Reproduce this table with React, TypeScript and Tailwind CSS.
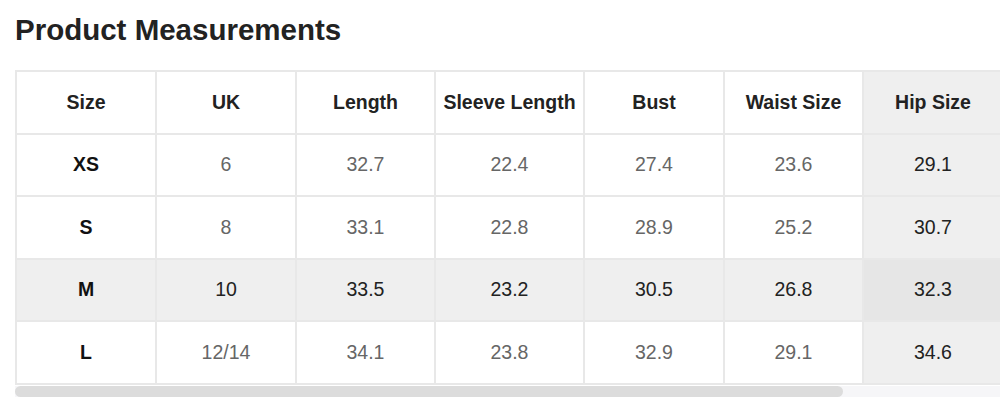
import React from "react";

const cols = ["Size", "UK", "Length", "Sleeve Length", "Bust", "Waist Size", "Hip Size"];
const widths = ["w-[140px]", "w-[140px]", "w-[139px]", "w-[149px]", "w-[140px]", "w-[139px]", "w-[140px]"];
const rows = [
  ["XS", "6", "32.7", "22.4", "27.4", "23.6", "29.1"],
  ["S", "8", "33.1", "22.8", "28.9", "25.2", "30.7"],
  ["M", "10", "33.5", "23.2", "30.5", "26.8", "32.3"],
  ["L", "12/14", "34.1", "23.8", "32.9", "29.1", "34.6"],
];

export default function App() {
  return (
    <div
      className="w-[1000px] h-[405px] overflow-hidden bg-white"
      style={{ fontFamily: '"Liberation Sans", Arial, sans-serif' }}
    >
      <h1 className="ml-[15px] mt-[13px] text-[29.5px] leading-[34px] font-bold text-[#222222]">
        Product Measurements
      </h1>
      <div className="ml-[15px] mt-[23px] w-[985px] overflow-hidden">
        <table className="table-fixed border-collapse w-[987px] text-[19.5px]">
          <colgroup>
            {widths.map((w, i) => (
              <col key={i} className={w} />
            ))}
          </colgroup>
          <thead>
            <tr className="h-[62.5px]">
              {cols.map((c, i) => (
                <th
                  key={c}
                  className={`border-2 border-[#e8e8e8] p-0 text-center align-middle font-bold text-[#222222] ${
                    i === 6 ? "bg-[#efefef]" : "bg-white"
                  }`}
                >
                  {c}
                </th>
              ))}
            </tr>
          </thead>
          <tbody>
            {rows.map((r, ri) => {
              const hl = ri === 2;
              return (
                <tr key={ri} className="h-[62.5px]">
                  {r.map((v, ci) => {
                    const colHl = ci === 6;
                    const bg = hl && colHl ? "bg-[#e6e6e6]" : hl || colHl ? "bg-[#efefef]" : "bg-white";
                    const color = ci === 0 ? "text-[#111111] font-bold" : hl || colHl ? "text-[#222222]" : "text-[#666666]";
                    return (
                      <td
                        key={ci}
                        className={`border-2 border-[#e8e8e8] p-0 text-center align-middle ${bg} ${color}`}
                      >
                        {v}
                      </td>
                    );
                  })}
                </tr>
              );
            })}
          </tbody>
        </table>
        <div className="mt-[1px] h-[11px] w-full bg-[#f6f6f8] flex">
          <div className="h-full w-[828px] rounded-full bg-[#dcdcdc]" />
        </div>
      </div>
    </div>
  );
}
